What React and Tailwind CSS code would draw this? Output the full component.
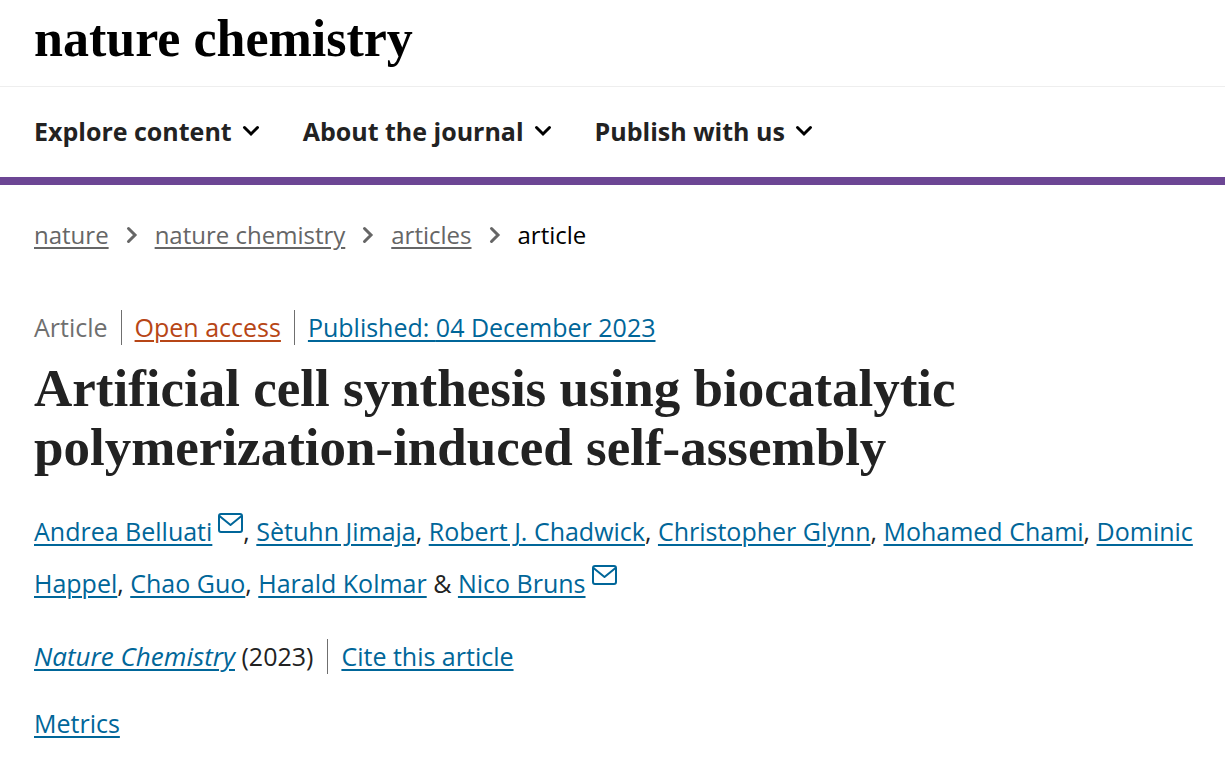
import React from 'react';

const menus = ['Explore content', 'About the journal', 'Publish with us'];
const crumbs = ['nature', 'nature chemistry', 'articles'];

const authors = [
  { name: 'Andrea Belluati', mail: true },
  { name: 'Sètuhn Jimaja' },
  { name: 'Robert J. Chadwick' },
  { name: 'Christopher Glynn' },
  { name: 'Mohamed Chami' },
  { name: 'Dominic Happel' },
  { name: 'Chao Guo' },
  { name: 'Harald Kolmar' },
  { name: 'Nico Bruns', mail: true },
];

const linkClass = 'text-[#006699] underline decoration-2 underline-offset-3';

const ChevronDown = () => (
  <svg className="w-[18px] h-3" viewBox="0 0 18 12" fill="none" stroke="#000" strokeWidth="3" strokeLinecap="round" aria-hidden="true">
    <path d="M2.500 2.500 9 9l6.500-6.500" />
  </svg>
);

const ChevronRight = () => (
  <svg className="w-3 h-[18px]" viewBox="0 0 12 18" fill="none" stroke="#666" strokeWidth="3" strokeLinecap="round" aria-hidden="true">
    <path d="M2.500 2.500 9 9l-6.500 6.500" />
  </svg>
);

const MailIcon = () => (
  <svg className="inline-block w-[25px] h-5 ml-[6px] mb-2 align-baseline" viewBox="0 0 25 20" fill="none" stroke="#006699" strokeWidth="2" strokeLinejoin="round" aria-hidden="true">
    <rect x="1" y="1" width="23" height="18" rx="2" />
    <path d="M1.500 3 12.500 12 23.500 3" />
  </svg>
);

const separatorFor = (index) => {
  if (index === authors.length - 1) return '';
  if (index === authors.length - 2) return ' & ';
  return ', ';
};

const App = () => {
  return (
    <div className="bg-white text-[#222] text-[25px] leading-[35px] font-['Open_Sans','Noto_Sans',sans-serif]">
      <header className="border-b-8 border-[#6c4694]">
        <div className="h-[87px] px-[34px] pb-2 border-b border-[#eee] flex items-center">
          <a href="#" className="text-black font-bold text-[52px] leading-[72px] font-['Liberation_Serif',serif]">
            nature chemistry
          </a>
        </div>

        <nav className="h-[90px] px-[34px] pb-[2px] flex items-center gap-[43px]">
          {menus.map((item) => (
            <button key={item} type="button" className="flex items-center gap-[10px] font-bold">
              {item}
              <ChevronDown />
            </button>
          ))}
        </nav>
      </header>

      <main className="px-[34px] pt-8">
        <nav aria-label="Breadcrumb">
          <ol className="flex items-center gap-[17px] text-[24px]">
            {crumbs.map((item) => (
              <li key={item} className="flex items-center gap-[17px]">
                <a href="#" className="text-[#666] underline decoration-2 underline-offset-3">{item}</a>
                <ChevronRight />
              </li>
            ))}
            <li className="text-black">article</li>
          </ol>
        </nav>

        <article className="pt-[58px]">
          <ul className="flex items-center">
            <li className="pr-[13px] text-[#6f6f6f]">Article</li>
            <li className="px-[13px] border-l border-[#6f6f6f]">
              <a href="#" className="text-[#b74616] underline decoration-2 underline-offset-3">Open access</a>
            </li>
            <li className="pl-[13px] border-l border-[#6f6f6f]">
              <a href="#" className={linkClass}>
                Published: <time dateTime="2023-12-04">04 December 2023</time>
              </a>
            </li>
          </ul>

          <h1 className="pt-[14px] font-bold text-[53px] leading-[59px] font-['Liberation_Serif',serif]">
            Artificial cell synthesis using biocatalytic<br />
            polymerization-induced self-assembly
          </h1>

          {/* Authors */}
          <p className="pt-7 -mr-2 leading-[52px]">
            {authors.map((author, index) => (
              <React.Fragment key={author.name}>
                <a href="#" className={linkClass}>{author.name}</a>
                {author.mail && <MailIcon />}
                {separatorFor(index)}
              </React.Fragment>
            ))}
          </p>

          <div className="pt-[30px] flex items-center">
            <p className="pr-[14px]">
              <a href="#" className={linkClass}><i className="text-[26px]">Nature Chemistry</i></a> (2023)
            </p>
            <p className="pl-[13px] border-l border-[#6f6f6f]">
              <a href="#" className={linkClass}>Cite this article</a>
            </p>
          </div>

          <p className="pt-8">
            <a href="#" className={linkClass}>Metrics</a>
          </p>
        </article>
      </main>
    </div>
  );
};

export default App;
